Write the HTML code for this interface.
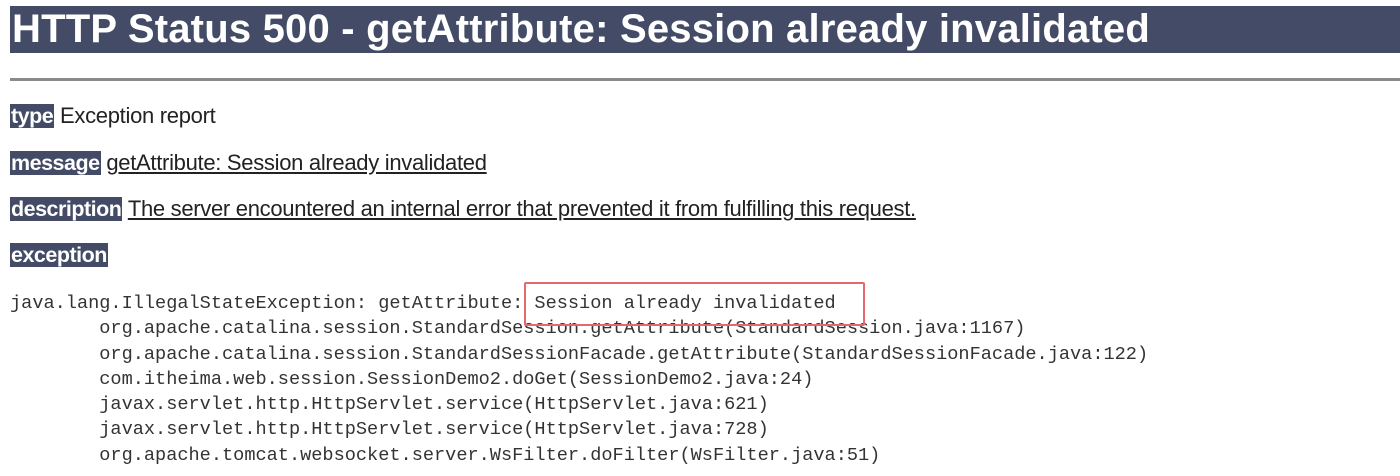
<!DOCTYPE html>
<html><head><meta charset="utf-8"><style>
body{margin:0;background:#fff;width:1400px;height:476px;overflow:hidden;position:relative;font-family:"Liberation Sans",Tahoma,sans-serif;color:#222}
.h1{position:absolute;left:10px;top:6px;width:1390px;height:47px;background:#434b66;color:#fff;font-weight:bold;font-size:40px;line-height:47px;padding-left:2px;box-sizing:border-box;letter-spacing:0.2px}
.hr{position:absolute;left:10px;top:78px;width:1390px;height:3px;background:#8a8a8a}
.row{position:absolute;left:10px;font-size:22px;line-height:25px;white-space:nowrap;letter-spacing:-0.3px}
.lb{background:#434b66;color:#fff;font-weight:bold;letter-spacing:-0.5px;padding:0 1px;font-size:21.5px}
.u{text-decoration:underline}
pre{position:absolute;left:10px;top:291px;margin:0;font-family:"Liberation Mono",monospace;font-size:18.6px;line-height:25.3px;color:#333}
.box{position:absolute;left:524px;top:282px;width:337px;height:40px;border:2px solid #e8676c;border-radius:2px}
</style></head><body>
<div class="h1">HTTP Status 500 - getAttribute: Session already invalidated</div>
<div class="hr"></div>
<div class="row" style="top:103px"><span class="lb">type</span> Exception report</div>
<div class="row" style="top:150px"><span class="lb">message</span> <span class="u">getAttribute: Session already invalidated</span></div>
<div class="row" style="top:196px"><span class="lb">description</span> <span class="u">The server encountered an internal error that prevented it from fulfilling this request.</span></div>
<div class="row" style="top:242px"><span class="lb">exception</span></div>
<pre>java.lang.IllegalStateException: getAttribute: Session already invalidated
        org.apache.catalina.session.StandardSession.getAttribute(StandardSession.java:1167)
        org.apache.catalina.session.StandardSessionFacade.getAttribute(StandardSessionFacade.java:122)
        com.itheima.web.session.SessionDemo2.doGet(SessionDemo2.java:24)
        javax.servlet.http.HttpServlet.service(HttpServlet.java:621)
        javax.servlet.http.HttpServlet.service(HttpServlet.java:728)
        org.apache.tomcat.websocket.server.WsFilter.doFilter(WsFilter.java:51)</pre>
<div class="box"></div>
</body></html>
